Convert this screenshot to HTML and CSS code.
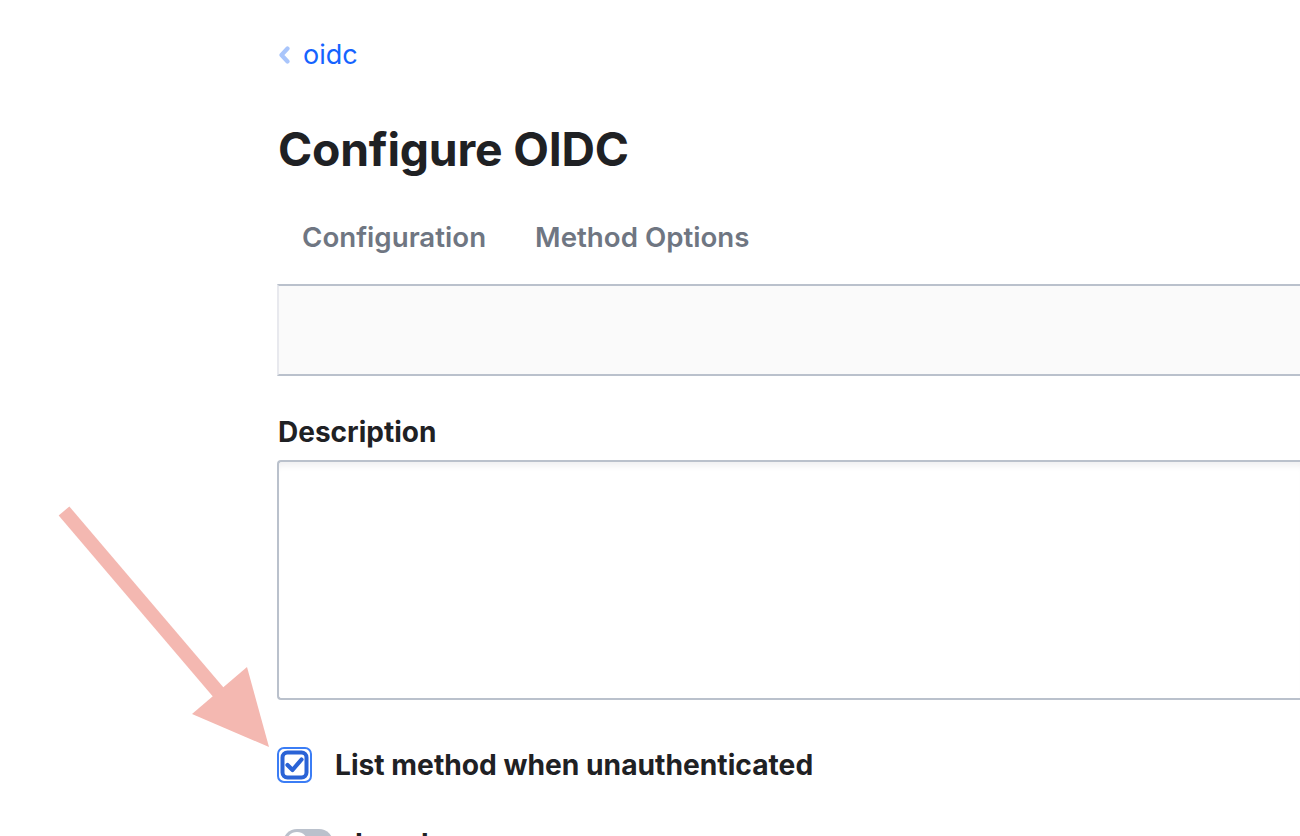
FILE: index.html
```html
<!DOCTYPE html>
<html>
<head>
<meta charset="utf-8">
<link rel="stylesheet" href="styles.css">
</head>
<body>
<div class="page">
  <nav class="crumb">
    <svg class="chev" width="13" height="18" viewBox="0 0 13 18"><path d="M9.5 2.5 L3.5 9 L9.5 15.5" fill="none" stroke="#a9c5fb" stroke-width="4.2" stroke-linecap="round" stroke-linejoin="round"/></svg>
    <a class="crumb-link">oidc</a>
  </nav>
  <h1 class="title">Configure OIDC</h1>
  <div class="tabs">
    <span class="tab">Configuration</span>
    <span class="tab">Method Options</span>
  </div>
  <div class="panel"></div>
  <label class="field-label">Description</label>
  <div class="textarea"></div>
  <div class="check-row">
    <svg class="checkbox" width="35" height="36" viewBox="0 0 35 36">
      <rect x="1" y="1" width="33" height="34" rx="6" fill="#fff" stroke="#3b7df5" stroke-width="2"/>
      <rect x="5.5" y="5.5" width="24" height="25" rx="5" fill="#fff" stroke="#2a63d6" stroke-width="4"/>
      <path d="M10.5 18 L15.5 23 L24.5 12.5" fill="none" stroke="#2a63d6" stroke-width="4.2" stroke-linecap="round" stroke-linejoin="round"/>
    </svg>
    <span class="check-label">List method when unauthenticated</span>
  </div>
  <div class="toggle-row">
    <span class="toggle"><span class="knob"></span></span>
    <span class="toggle-label">Local</span>
  </div>
</div>
<svg class="arrow" width="300" height="780" viewBox="0 0 300 780">
  <line x1="64" y1="511" x2="225" y2="700" stroke="#f4b8b1" stroke-width="14"/>
  <polygon points="192,714 247,667 269,747" fill="#f4b8b1"/>
</svg>
</body>
</html>
```
FILE: styles.css
```css
html, body {
  margin: 0;
  padding: 0;
  background: #fff;
  overflow: hidden;
}
body {
  width: 1300px;
  height: 836px;
  font-family: Inter, "Noto Sans", sans-serif;
  color: #1f2124;
}
.page {
  padding: 40px 0 0 277px;
}
.crumb {
  display: flex;
  align-items: center;
  gap: 12px;
  height: 30px;
  padding-left: 1px;
}
.chev {
  display: block;
}
.crumb-link {
  color: #1563ff;
  font-size: 27px;
  line-height: 30px;
}
.title {
  margin: 49px 0 0 1px;
  font-size: 46.3px;
  font-weight: 700;
  line-height: 60px;
  letter-spacing: -0.2px;
}
.tabs {
  display: flex;
  gap: 49px;
  padding-left: 25px;
  margin-top: 30px;
  height: 56px;
  align-items: center;
}
.tab {
  font-size: 27.7px;
  font-weight: 600;
  color: #6f7682;
}
.panel {
  margin-top: 19px;
  height: 88px;
  background: #fafafa;
  border-top: 2px solid #bac1cc;
  border-bottom: 2px solid #bac1cc;
  border-left: 2px solid #e8e9ee;
}
.field-label {
  display: block;
  margin: 40px 0 0 1px;
  font-size: 28px;
  font-weight: 700;
  line-height: 32px;
}
.textarea {
  margin-top: 12px;
  height: 236px;
  border: 2px solid #bac1cc;
  border-right: none;
  border-radius: 4px 0 0 4px;
  background: #fff;
  box-shadow: inset 0 8px 6px -4px #f0f0f2;
}
.check-row {
  display: flex;
  align-items: center;
  gap: 23px;
  margin-top: 47px;
}
.checkbox {
  display: block;
}
.check-label {
  font-size: 28.2px;
  font-weight: 700;
  line-height: 36px;
}
.toggle-row {
  display: flex;
  align-items: flex-start;
  gap: 22px;
  margin-top: 46px;
  padding-left: 6px;
}
.toggle {
  position: relative;
  flex: none;
  width: 50px;
  height: 28px;
  border-radius: 14px;
  background: #bac1cc;
}
.knob {
  position: absolute;
  left: 3px;
  top: 3px;
  width: 22px;
  height: 22px;
  border-radius: 50%;
  background: #fff;
}
.toggle-label {
  font-size: 28px;
  font-weight: 700;
  line-height: 30px;
}
.arrow {
  position: absolute;
  left: 0;
  top: 0;
  pointer-events: none;
}
```
